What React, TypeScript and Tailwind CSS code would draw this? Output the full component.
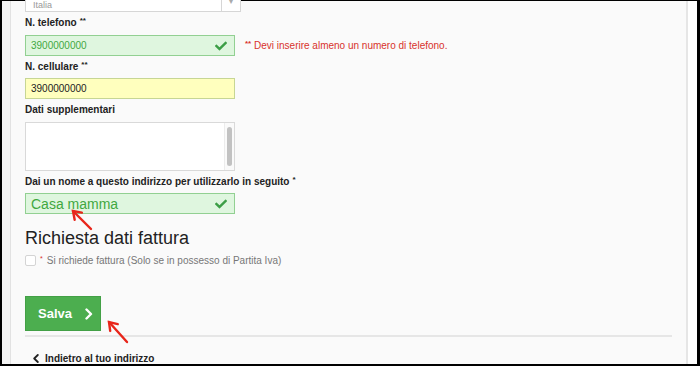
import { FaCheck } from "react-icons/fa";

const font = { fontFamily: '"Liberation Sans", Arial, sans-serif' };

function Label({ text, mark }: { text: string; mark: string }) {
  return (
    <div className="h-[12px] text-[10px] leading-[12px] font-bold text-[#222] whitespace-nowrap">
      {text}
      <span className="ml-[3px] text-[8px] leading-none align-top">{mark}</span>
    </div>
  );
}

function Arrow({ x1, y1, x2, y2 }: { x1: number; y1: number; x2: number; y2: number }) {
  // line from tail (x1,y1) to head (x2,y2) with two barbs
  const a = Math.atan2(y1 - y2, x1 - x2);
  const len = 9;
  const b1 = [x2 + len * Math.cos(a + 0.6), y2 + len * Math.sin(a + 0.6)];
  const b2 = [x2 + len * Math.cos(a - 0.6), y2 + len * Math.sin(a - 0.6)];
  return (
    <g stroke="#e8251a" strokeWidth={2.4} strokeLinecap="round" fill="none">
      <line x1={x1} y1={y1} x2={x2} y2={y2} />
      <polyline points={`${b1[0]},${b1[1]} ${x2},${y2} ${b2[0]},${b2[1]}`} />
    </g>
  );
}

export default function App() {
  return (
    <div
      className="relative w-[700px] h-[366px] bg-black pt-[1px] pl-[2px] pr-[3px] pb-[2px] overflow-hidden"
      style={font}
    >
      <div className="flex h-full">
        <div className="w-[8px] bg-[#f4f4f4] border-r border-[#e2e2e2] box-content" />
        <div className="w-[675px] bg-[#fafafa] pl-[14px] pr-[14px] flex flex-col *:shrink-0">
          {/* Country select (scrolled off the top) */}
          <div className="mt-[-11px] w-[216px] h-[22px] bg-white border border-[#d6d6d6] flex">
            <div className="flex-1 pl-[7px] pt-[9px] text-[9px] leading-[10px] text-[#999]">Italia</div>
            <div className="w-[19px] border-l border-[#d6d6d6] flex items-end justify-center pb-[5px] text-[8px] leading-[8px] text-[#aaa]">
              ▾
            </div>
          </div>

          <div className="mt-[5px]">
            <Label text="N. telefono" mark="**" />
          </div>
          <div className="mt-[6px] h-[21px] flex items-center">
            <div className="w-[210px] h-[21px] bg-[#dff6df] border border-[#92d092] flex items-center justify-between pl-[5px] pr-[7px]">
              <span className="text-[10px] text-[#3fa83f]">3900000000</span>
              <FaCheck className="text-[#3c9e46]" size={12} />
            </div>
            <span className="ml-[10px] text-[10px] text-[#d8322c]">
              <span className="text-[8px] font-bold align-top">**</span> Devi inserire almeno un numero di telefono.
            </span>
          </div>

          <div className="mt-[5px]">
            <Label text="N. cellulare" mark="**" />
          </div>
          <div className="mt-[5px] w-[210px] h-[21px] bg-[#ffffbe] border border-[#c7d694] flex items-center pl-[5px]">
            <span className="text-[10px] text-[#222]">3900000000</span>
          </div>

          <div className="mt-[5px] h-[12px] text-[10px] leading-[12px] font-bold text-[#222]">Dati supplementari</div>
          <div className="mt-[6px] w-[210px] h-[49px] bg-white border border-[#d9d9d9] flex justify-end">
            <div className="w-[10px] border-l border-[#ececec] bg-[#fafafa] flex justify-center pt-[4px]">
              <div className="w-[5px] h-[39px] rounded-full bg-[#c2c2c2]" />
            </div>
          </div>

          <div className="mt-[5px]">
            <Label text="Dai un nome a questo indirizzo per utilizzarlo in seguito" mark="*" />
          </div>
          <div className="mt-[5px] w-[210px] h-[21px] bg-[#dff6df] border border-[#92d092] flex items-center justify-between pl-[5px] pr-[7px]">
            <span className="text-[14px] leading-[16px] text-[#3fa83f]">Casa mamma</span>
            <FaCheck className="text-[#3c9e46]" size={12} />
          </div>

          <div className="mt-[14px] h-[20px] text-[18px] leading-[20px] text-[#222]">Richiesta dati fattura</div>
          <div className="mt-[7px] h-[12px] flex items-start">
            <div className="w-[11px] h-[11px] bg-white border border-[#d4d4d4] rounded-[2px]" />
            <span className="ml-[4px] text-[7px] leading-[7px] text-[#d8322c]">*</span>
            <span className="ml-[4px] text-[10px] leading-[12px] text-[#777]">
              Si richiede fattura (Solo se in possesso di Partita Iva)
            </span>
          </div>

          <button className="mt-[29px] w-[76px] h-[35px] bg-[#4cae4f] border border-[#43a046] flex items-center pl-[12px] text-white">
            <span className="text-[13px] font-bold">Salva</span>
            <svg className="ml-[13px]" width="8" height="12" viewBox="0 0 8 12">
              <polyline points="1.5,1.5 6,6 1.5,10.5" fill="none" stroke="white" strokeWidth="2.4" strokeLinecap="round" strokeLinejoin="round" />
            </svg>
          </button>
          <div className="mt-[4px] w-[647px] h-[2px] bg-[#e6e6e6]" />

          <div className="mt-[15px] h-[12px] flex items-center pl-[8px]">
            <svg width="6" height="9" viewBox="0 0 6 9">
              <polyline points="4.8,1 1.2,4.5 4.8,8" fill="none" stroke="#222" strokeWidth="1.8" strokeLinecap="round" strokeLinejoin="round" />
            </svg>
            <span className="ml-[6px] text-[10px] font-bold text-[#222]">Indietro al tuo indirizzo</span>
          </div>
        </div>
        <div className="w-[2px] bg-[#e6e6e6]" />
        <div className="w-[9px] bg-white" />
      </div>

      {/* annotation arrows */}
      <svg className="absolute left-0 top-0 pointer-events-none" width="700" height="366">
        <Arrow x1={91} y1={229} x2={73} y2={211} />
        <Arrow x1={127} y1={342} x2={109} y2={322} />
      </svg>
    </div>
  );
}
